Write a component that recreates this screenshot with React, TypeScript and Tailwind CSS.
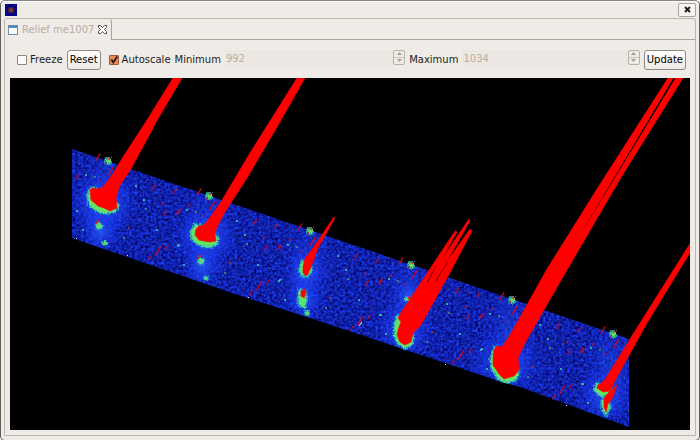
import React from "react";

type Pt = [number, number];

const MODULES: Pt[] = [[0, 0], [101, 35], [202, 70], [303, 104], [404, 139], [505, 173]];
const BAND = "72,149 629,339 629,427 520,387 505,383 400,348 310,318 235,294 72,238";

// x, y, length of each red streak, for the first module
const STREAKS: [number, number, number][] = [
  [98, 157, 7], [77, 177, 5], [111, 171, 9], [154, 187, 6], [175, 191, 5],
  [165, 213, 5], [179, 212, 5], [158, 251, 9], [167, 247, 5], [150, 258, 5],
  [163, 203, 3], [101, 181, 2], [106, 163, 2], [189, 205, 3], [129, 228, 2],
];
const SPECKS: Pt[] = [
  [86, 175], [95, 177], [136, 186], [144, 200], [146, 209],
  [157, 230], [77, 211], [129, 228], [83, 230], [179, 245], [124, 238],
];

const GLOWS: [number, number, number, number][] = [
  [103, 203, 36, 32], [205, 236, 34, 30], [305, 272, 20, 26], [404, 331, 30, 32],
  [505, 363, 40, 34], [604, 396, 28, 30], [100, 232, 20, 24], [202, 266, 20, 24],
  [304, 300, 20, 22], [408, 296, 14, 16],
];

const HALOS: string[] = [
  "M92 188 L89 192 L88 197 L90 205 L97 211 L107 213 L115 211 L118 205 L112 200 L98 190 Z",
  "M195 225 L191 232 L193 240 L200 245 L209 247 L216 244 L218 239 L210 228 Z",
  "M302 262 L300 269 L302 275 L307 276 L311 271 L308 262 Z",
  "M300 291 L299 298 L300 305 L304 307 L306 300 L305 291 Z",
  "M398 316 L395 325 L395 336 L399 344 L405 348 L411 345 L413 338 L404 318 Z",
  "M495 348 L491 359 L493 370 L499 379 L506 382 L515 380 L518 374 L517 365 Z",
  "M597 384 L595 390 L600 395 L609 397 L611 390 Z",
  "M605 398 L602 403 L603 411 L606 414 L610 406 Z",
];

const PEAKS: string[] = [
  "M173 78 L182 78 L159 117 L132 167 L119 187 L116 198 L117 208 L110 211 L104 208 L98 206 L91 200 L90 190 L93 188 L98 189 L103 187 L112 175 L123 157 L147 120 Z",
  "M297 78 L305 78 L277 127 L247 178 L225 212 L217 227 L215 234 L216 241 L209 242 L199 240 L195 235 L196 229 L199 226 L204 225 L209 219 L222 200 L250 153 Z",
  "M334 217 L335 218 L318 248 L311 267 L308 274 L306 276 L303 273 L303 267 L305 258 L313 248 Z",
  "M301 291 L305 289 L306 293 L304 298 L301 296 Z",
  "M455 231 L457 232 L442 259 L469 219 L470 221 L446 263 L470 229 L472 231 L447 278 L421 325 L413 333 L411 342 L405 345 L400 342 L397 335 L399 327 L401 322 L398 318 L402 311 Z",
  "M668 78 L683 78 L620 179 L560 282 L525 343 L518 358 L519 370 L514 376 L504 379 L499 374 L493 365 L493 358 L494 350 L497 346 L502 347 L510 335 L547 269 L597 189 Z",
  "M691 242 L691 251 L647 323 L617 377 L610 391 L603 392 L597 388 L598 385 L604 381 L611 370 L630 339 Z",
  "M617 385 L613 397 L608 404 L606 412 L604 407 L604 398 L609 392 Z",
];

function ReliefPlot() {
  return (
    <svg viewBox="10 78 680 352" className="block w-full bg-black" role="img" aria-label="Relief me1007">
      <defs>
        <clipPath id="band"><polygon points={BAND} /></clipPath>
        <filter id="grain" x="0" y="0" width="1" height="1" colorInterpolationFilters="sRGB">
          <feTurbulence type="fractalNoise" baseFrequency="0.37" numOctaves="4" seed="11" />
          <feColorMatrix values="0.2 0 0 0 -0.04  0.28 0.28 0 0 -0.15  0.7 0.6 0.3 0 -0.13  0 0 0 0 1" />
        </filter>
        <filter id="speckle" x="-0.2" y="-0.2" width="1.4" height="1.4" colorInterpolationFilters="sRGB">
          <feTurbulence type="fractalNoise" baseFrequency="0.6" numOctaves="1" seed="4" />
          <feDisplacementMap in="SourceGraphic" scale="6" xChannelSelector="R" yChannelSelector="G" />
        </filter>
        <radialGradient id="glow">
          <stop offset="0" stopColor="#2862ff" stopOpacity="0.75" />
          <stop offset="0.5" stopColor="#2046ff" stopOpacity="0.45" />
          <stop offset="1" stopColor="#1a35ff" stopOpacity="0" />
        </radialGradient>
      </defs>
      <g clipPath="url(#band)">
        <rect x="70" y="146" width="562" height="284" filter="url(#grain)" />
        {MODULES.map(([dx, dy], i) => (
          <ellipse key={i} cx={106 + dx} cy={196 + dy} rx="28" ry="56" fill="url(#glow)" opacity="0.55" />
        ))}
        {GLOWS.map(([cx, cy, rx, ry], i) => (
          <ellipse key={i} cx={cx} cy={cy} rx={rx} ry={ry} fill="url(#glow)" />
        ))}
        {MODULES.map(([dx, dy], i) => (
          <g key={i} transform={`translate(${dx} ${dy})`}>
            {SPECKS.map(([x, y], j) => (
              <circle key={j} cx={x} cy={y} r="1.1" fill={j % 3 === 1 ? "#4a9a62" : "#42cba8"} />
            ))}
          </g>
        ))}
      </g>
      {MODULES.map(([dx, dy], i) => (
        <g key={i} transform={`translate(${dx} ${dy})`}>
          <g filter="url(#speckle)">
            <circle cx="108" cy="161" r="4" fill="#2598a8" />
            <circle cx="108" cy="161" r="2.6" fill="#60df68" />
          </g>
          <circle cx="109" cy="159" r="1.3" fill="#c55026" />
          {STREAKS.map(([x, y, l], j) =>
            dx + x < 629 ? (
              <line key={j} x1={x - l * 0.3} y1={y + l * 0.5} x2={x + l * 0.3} y2={y - l * 0.5}
                stroke={l > 6 ? "#c80a28" : "#a8103c"} strokeWidth="1.4" />
            ) : null
          )}
        </g>
      ))}
      <g filter="url(#speckle)">
        {([[99, 226, 4], [105, 243, 3], [201, 261, 4], [206, 278, 3], [307, 313, 3], [407, 299, 3], [301, 303, 3]] as [number, number, number][]).map(([x, y, r], i) => (
          <g key={i}>
            <circle cx={x} cy={y} r={r} fill="#2598a8" />
            <circle cx={x} cy={y} r={r - 1} fill="#58dc82" />
          </g>
        ))}
        {HALOS.map((d, i) => (
          <g key={i}>
            <path d={d} fill="none" stroke="#2290c5" strokeWidth="4" />
            <path d={d} fill="#62e75c" stroke="#54d890" strokeWidth="1.5" />
          </g>
        ))}
      </g>
      {PEAKS.map((d, i) => (
        <path key={i} d={d} fill="#ff0000" stroke="#ff0000" strokeWidth="0.6" />
      ))}
      <path d="M673.5 78 L675.5 78 L577 240 Z" fill="#000" />
      <path d="M436 266 L427 283 M447 263 L435 282" stroke="#000" strokeWidth="0.8" opacity="0.7" fill="none" />
      <path d="M96 224 l3 -4 M198 259 l3 -4 M408 299 l2 -4" stroke="#d82020" strokeWidth="1.6" />
      <path d="M359 326 l3 -4" stroke="#fff" strokeWidth="1" />
      <g fill="#d8f4ff">
        <rect x="127" y="255" width="1" height="1" />
        <rect x="248" y="297" width="1" height="1" />
        <rect x="445" y="364" width="1" height="1" />
        <rect x="566" y="405" width="1" height="1" />
        <rect x="76" y="238" width="1" height="1" />
      </g>
    </svg>
  );
}

function Check({ id, label, checked }: { id: string; label: string; checked?: boolean }) {
  return (
    <div className="flex items-center gap-[3px]">
      <span className="relative block h-[10px] w-[10px]">
        <input
          id={id}
          type="checkbox"
          defaultChecked={checked}
          className="peer block h-[10px] w-[10px] appearance-none rounded-[1px] border border-[#8d8882] bg-[#faf9f7] checked:border-[#9c5b35] checked:bg-[#e58c58]"
        />
        <svg viewBox="0 0 10 10" className="pointer-events-none absolute inset-0 hidden h-[10px] w-[10px] peer-checked:block">
          <path d="M2.4 4.6 L4.3 7.4 L8.2 1.6" fill="none" stroke="#2a120a" strokeWidth="1.8" />
        </svg>
      </span>
      <label htmlFor={id}>{label}</label>
    </div>
  );
}

function Spinner({ id, label, value }: { id: string; label: string; value: string }) {
  return (
    <div className="flex min-w-0 flex-1 items-center gap-1">
      <label htmlFor={id}>{label}</label>
      <div className="mb-1 flex min-w-0 flex-1">
        <input
          id={id}
          disabled
          defaultValue={value}
          className="h-[17px] min-w-0 flex-1 bg-[#ece7e2] px-px text-[#b8b0a1]"
        />
        <div className="flex h-[15px] w-3 flex-col rounded-[2px] border border-[#b9b2a7]">
          <button type="button" disabled aria-label={`Increase ${label}`} className="flex flex-1 items-center justify-center border-b border-[#c9c3b9]">
            <svg viewBox="0 0 5 3" className="h-[3px] w-[5px]"><path d="M0 3 L2.5 0 L5 3 Z" fill="#a39c8f" /></svg>
          </button>
          <button type="button" disabled aria-label={`Decrease ${label}`} className="flex flex-1 items-center justify-center">
            <svg viewBox="0 0 5 3" className="h-[3px] w-[5px]"><path d="M0 0 L2.5 3 L5 0 Z" fill="#a39c8f" /></svg>
          </button>
        </div>
      </div>
    </div>
  );
}

function PushButton({ children }: { children: React.ReactNode }) {
  return (
    <button type="button" className="h-5 rounded-[3px] border border-[#8f8a83] bg-linear-to-b from-white to-[#eeeae6] px-[2px] text-black">
      {children}
    </button>
  );
}

export default function App() {
  return (
    <div className="bg-white font-['DejaVu_Sans',sans-serif] text-[10px] leading-4 text-[#1c1c1c]">
      <div className="rounded-[5px] border border-[#625e5b] border-t-[#8b8783] bg-[#efebe7] px-[3px] pb-1 shadow-[inset_0_1px_0_#fff]">
        <header className="flex h-[17px] items-center justify-between pl-px">
          <svg viewBox="0 0 12 12" className="h-3 w-3" aria-hidden="true">
            <rect width="12" height="12" fill="#050583" />
            <circle cx="6" cy="6" r="3.6" fill="#26155d" />
            <circle cx="6" cy="6" r="2.5" fill="#883024" />
            <path d="M5 5h2v2H5z" fill="#395c30" />
            <path d="M1 1h2M9 2h2M1 10h2M8 10h2" stroke="#1616b5" />
          </svg>
          <button type="button" aria-label="Close window" className="flex h-[14px] w-[18px] items-center justify-center rounded-[2px] border border-[#aaa49d] bg-[#f7f5f3]">
            <svg viewBox="0 0 7 7" className="h-[7px] w-[7px]"><path d="M1 1 L6 6 M6 1 L1 6" stroke="#24201e" strokeWidth="2" /></svg>
          </button>
        </header>
        <main className="rounded-t-[3px] border border-[#bdb6ae]">
          <div className="flex h-[21px]">
            <div className="flex items-center gap-1 rounded-tr-[3px] border-r border-[#aaa39b] pl-[3px] pr-1 text-[#b9ada0]">
              <svg viewBox="0 0 10 10" className="h-[10px] w-[10px]" aria-hidden="true">
                <rect x="0.5" y="0.5" width="9" height="9" fill="#fff" stroke="#6d8fac" />
                <rect x="1" y="1" width="8" height="2" fill="#4c8cc4" />
              </svg>
              <span className="whitespace-nowrap">Relief me1007</span>
              <button type="button" aria-label="Close tab">
                <svg viewBox="0 0 9 9" className="block h-[9px] w-[9px]">
                  <path d="M.5 .5 H2.5 L4.5 2.5 L6.5 .5 H8.5 V2.5 L6.5 4.5 L8.5 6.5 V8.5 H6.5 L4.5 6.5 L2.5 8.5 H.5 V6.5 L2.5 4.5 L.5 2.5 Z" fill="#fff" stroke="#403c38" strokeWidth="0.9" />
                </svg>
              </button>
            </div>
            <div className="flex-1 border-b border-[#aaa39b]" />
          </div>
          <div className="px-[5px] pb-[5px]">
            <div className="flex h-[38px] items-center gap-1 pl-[7px] pr-1 pt-[2px]">
              <Check id="freeze" label="Freeze" />
              <PushButton>Reset</PushButton>
              <div className="pl-1"><Check id="autoscale" label="Autoscale" checked /></div>
              <Spinner id="minimum" label="Minimum" value="992" />
              <Spinner id="maximum" label="Maximum" value="1034" />
              <PushButton>Update</PushButton>
            </div>
            <ReliefPlot />
          </div>
        </main>
      </div>
    </div>
  );
}
